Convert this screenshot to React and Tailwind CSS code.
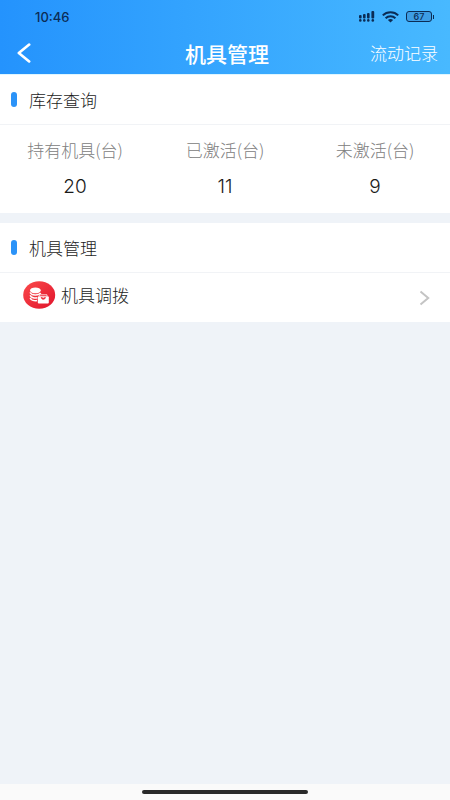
import React from "react";

const stats = [
  { label: "持有机具(台)", value: 20 },
  { label: "已激活(台)", value: 11 },
  { label: "未激活(台)", value: 9 },
];

function StatusBar() {
  return (
    <div className="flex h-8 items-center justify-between pt-px pr-4 pl-[35px] text-[#0b2c55]">
      <span className="font-['Inter',sans-serif] text-[13px] leading-4 font-medium">10:46</span>
      <div className="flex items-center gap-[7px]">
        <svg width="16" height="11" viewBox="0 0 16 11" fill="currentColor" aria-hidden="true">
          <rect x="0" y="4" width="2.6" height="3.4" rx="1" />
          <rect x="4" y="3" width="2.6" height="4.4" rx="1" />
          <rect x="8" y="2" width="2.6" height="5.4" rx="1" />
          <rect x="12.4" y="0" width="2.8" height="7.4" rx="1" />
          <circle cx="1.3" cy="9.4" r="1.3" />
          <circle cx="5.3" cy="9.4" r="1.3" />
          <circle cx="9.3" cy="9.4" r="1.3" />
          <circle cx="13.8" cy="9.4" r="1.3" />
        </svg>
        <svg width="17" height="12" viewBox="0 0 17 12" fill="none" stroke="currentColor" strokeWidth="2" aria-hidden="true">
          <path d="M0.8 4.4C5 0.2 12 0.2 16.2 4.4" />
          <path d="M3.6 7.2C6.4 4.5 10.6 4.5 13.4 7.2" />
          <path d="M8.5 11.4L5.9 8.9C7.4 7.6 9.6 7.6 11.1 8.9Z" fill="currentColor" stroke="none" />
        </svg>
        <div className="flex items-center gap-px">
          <div className="flex h-[11px] w-[26px] items-center justify-center rounded-[3px] border border-current bg-[#3d9de4] font-['Inter',sans-serif] text-[9px] leading-none font-medium">
            67
          </div>
          <span className="h-1 w-px bg-current" />
        </div>
      </div>
    </div>
  );
}

function SectionTitle({ children }) {
  return (
    <h2 className="flex h-[50px] items-center gap-3 border-b border-[#f1f3f6] pl-[11px] text-[17px] leading-6 font-light text-[#1c1c1c]">
      <span className="h-[15px] w-[6px] rounded-[3px] bg-[#2b93f8]" />
      {children}
    </h2>
  );
}

function TransferIcon() {
  return (
    <svg width="33" height="28" viewBox="0 0 33 28" aria-hidden="true">
      <defs>
        <linearGradient id="badge" x1="0" y1="0" x2="1" y2="1">
          <stop offset="0" stopColor="#fb4a4b" />
          <stop offset="1" stopColor="#e0142c" />
        </linearGradient>
      </defs>
      <ellipse cx="16.2" cy="14" rx="16" ry="13.8" fill="url(#badge)" />
      <ellipse cx="12.4" cy="9.4" rx="5.4" ry="2.9" fill="#fff" />
      <g fill="none" stroke="#fff" strokeWidth="1.6">
        <path d="M7.2 11.4C8 14.6 15.7 15 17.7 12" />
        <path d="M7.2 14.2C8 16.9 12 17.3 14.3 16.7" />
        <path d="M7.2 17C8 19.4 11.5 20 14 19.5" />
      </g>
      <path d="M16.6 15V13.8H24V15" fill="none" stroke="#ffd0d0" strokeWidth="1" />
      <rect x="14.8" y="15.2" width="11" height="7.2" rx="1" fill="#fff" />
      <path d="M18.2 16.4C18.4 18.8 22.2 18.8 22.4 16.4L20.3 17.2Z" fill="#ee2b38" stroke="#ee2b38" strokeWidth="0.8" />
    </svg>
  );
}

export default function App() {
  return (
    <div className="flex min-h-screen flex-col bg-[#eff3f8] font-['Noto_Sans_CJK_SC',sans-serif]">
      <header className="bg-linear-to-r from-[#2493fd] to-[#48b9ff]">
        <StatusBar />
        <div className="grid h-[42px] grid-cols-3 items-center pr-3 pl-4">
          <button type="button" aria-label="返回" className="justify-self-start text-white">
            <svg width="15" height="20" viewBox="0 0 15 20" fill="none" stroke="currentColor" strokeWidth="2.6" strokeLinecap="round" strokeLinejoin="round" aria-hidden="true">
              <path d="M13.2 1.6L2.8 10L13.2 18.4" />
            </svg>
          </button>
          <h1 className="text-center text-[21px] leading-6 font-medium whitespace-nowrap text-white">机具管理</h1>
          <button type="button" className="justify-self-end text-[17px] leading-6 font-light whitespace-nowrap text-white">
            流动记录
          </button>
        </div>
      </header>

      <main className="flex grow flex-col gap-[10px]">
        <section className="border-t border-[#dff6ff] bg-white">
          <SectionTitle>库存查询</SectionTitle>
          <dl className="grid h-[88px] grid-cols-3 pt-[13px] text-center">
            {stats.map((s) => (
              <div key={s.label} className="flex flex-col gap-[13px]">
                <dt className="text-[17px] leading-6 font-light text-[#808080]">{s.label}</dt>
                <dd className="font-['Inter',sans-serif] text-[19px] leading-6 font-light text-[#1a1a1a]">{s.value}</dd>
              </div>
            ))}
          </dl>
        </section>

        <section className="bg-white">
          <SectionTitle>机具管理</SectionTitle>
          <a href="#transfer" className="flex h-[49px] items-center justify-between pr-5 pl-[23px]">
            <span className="flex items-center gap-[5px] pb-[6px] text-[17px] leading-6 font-light text-[#1c1c1c]">
              <TransferIcon />
              机具调拨
            </span>
            <svg width="11" height="16" viewBox="0 0 11 16" fill="none" stroke="#c4c4c4" strokeWidth="2" aria-hidden="true">
              <path d="M1.5 1.5L9.2 8L1.5 14.5" />
            </svg>
          </a>
        </section>
      </main>

      <footer className="flex h-4 items-center justify-center bg-[#fafafa]">
        <span className="h-1 w-[37%] rounded-full bg-[#2a2a2a]" />
      </footer>
    </div>
  );
}
